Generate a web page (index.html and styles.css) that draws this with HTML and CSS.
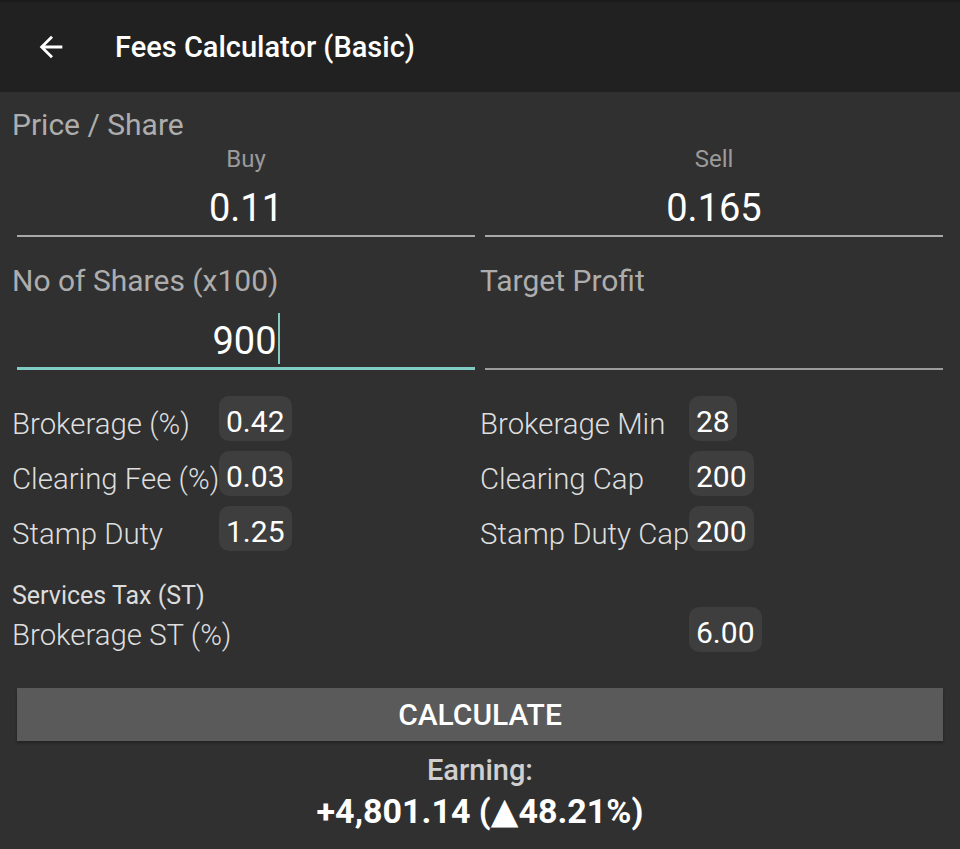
FILE: index.html
```html
<!DOCTYPE html>
<html lang="en">
<head>
    <meta charset="UTF-8">
    <meta name="viewport" content="width=device-width, initial-scale=1.0">
    <title>Fees Calculator (Basic)</title>
    <link rel="stylesheet" href="styles.css">
</head>
<body>
    <header class="app-bar">
        <svg class="back-icon" viewBox="0 0 24 24" width="34" height="34">
            <path d="M20 11H7.83l5.59-5.59L12 4l-8 8 8 8 1.41-1.41L7.83 13H20v-2z" fill="#fff"/>
        </svg>
        <h1 class="app-title">Fees Calculator (Basic)</h1>
    </header>

    <main class="content">
        <div class="section-title">Price / Share</div>
        <div class="pair">
            <div class="field">
                <div class="field-hint">Buy</div>
                <div class="field-input">0.11</div>
            </div>
            <div class="field">
                <div class="field-hint">Sell</div>
                <div class="field-input">0.165</div>
            </div>
        </div>

        <div class="pair shares">
            <div class="field">
                <div class="section-title">No of Shares (x100)</div>
                <div class="field-input focused">900<span class="caret"></span></div>
            </div>
            <div class="field">
                <div class="section-title">Target Profit</div>
                <div class="field-input"></div>
            </div>
        </div>

        <div class="fees">
            <div class="fee"><span class="fee-label">Brokerage (%)</span><span class="chip">0.42</span></div>
            <div class="fee"><span class="fee-label">Brokerage Min</span><span class="chip">28</span></div>
            <div class="fee"><span class="fee-label">Clearing Fee (%)</span><span class="chip">0.03</span></div>
            <div class="fee"><span class="fee-label">Clearing Cap</span><span class="chip">200</span></div>
            <div class="fee"><span class="fee-label">Stamp Duty</span><span class="chip">1.25</span></div>
            <div class="fee"><span class="fee-label">Stamp Duty Cap</span><span class="chip">200</span></div>
        </div>

        <div class="tax-title">Services Tax (ST)</div>
        <div class="fees tax">
            <div class="fee"><span class="fee-label">Brokerage ST (%)</span></div>
            <div class="fee"><span class="fee-label"></span><span class="chip">6.00</span></div>
        </div>

        <button class="calc-button">CALCULATE</button>

        <div class="result">
            <div class="result-label">Earning:</div>
            <div class="result-value">+4,801.14 (<span class="arrow-up">▲</span>48.21%)</div>
        </div>
    </main>
</body>
</html>
```

FILE: styles.css
```css
body {
    margin: 0;
    background: #303030;
    font-family: Roboto, "Noto Sans", sans-serif;
    color: #fff;
}
.app-bar {
    height: 92px;
    background: #212121;
    border-top: 2px solid #1b1b1b;
    display: flex;
    align-items: center;
    padding-left: 34px;
    box-sizing: border-box;
}
.back-icon {
    display: block;
}
.app-title {
    margin: 0 0 0 47px;
    font-size: 29px;
    font-weight: 500;
    color: #fff;
}
.content {
    padding: 16px 12px 0;
}
.section-title {
    font-size: 30px;
    color: #adadad;
    line-height: 34px;
}
.pair {
    display: grid;
    grid-template-columns: 1fr 1fr;
}
.field-hint {
    text-align: center;
    font-size: 24px;
    color: #9a9a9a;
    line-height: 28px;
    margin-top: 3px;
}
.field-input {
    margin: 0 5px;
    height: 62px;
    border-bottom: 2px solid #a8a8a8;
    text-align: center;
    font-size: 38px;
    line-height: 70px;
    color: #fff;
}
.shares {
    margin-top: 27px;
}
.shares .field-input {
    height: 70px;
    line-height: 86px;
    border-bottom: 2px solid #9c9c9c;
}
.shares .field-input.focused {
    height: 69px;
    border-bottom: 3px solid #80cbc4;
}
.caret {
    display: inline-block;
    width: 2px;
    height: 51px;
    background: #80cbc4;
    vertical-align: -10px;
    margin-left: 1px;
}
.fees {
    display: grid;
    grid-template-columns: 1fr 1fr;
    row-gap: 10px;
    margin-top: 26px;
}
.fee {
    display: flex;
    align-items: flex-start;
    height: 45px;
}
.fee-label {
    width: 207px;
    flex-shrink: 0;
    white-space: nowrap;
    padding-top: 8px;
    line-height: 40px;
    font-size: 29.4px;
    font-weight: 300;
    color: #dedede;
}
.fees .fee:nth-child(even) .fee-label {
    width: 209px;
}
.chip {
    background: #3e3e3e;
    border-radius: 10px;
    padding: 7px 7px 0;
    height: 45px;
    box-sizing: border-box;
    line-height: 38px;
    font-size: 30px;
    color: #fff;
}
.tax-title {
    margin-top: 31px;
    font-size: 25px;
    color: #dcdcdc;
    line-height: 28px;
}
.fees.tax {
    margin-top: -3px;
}
.calc-button {
    display: block;
    width: calc(100% - 10px);
    margin: 36px 5px 0;
    height: 53px;
    border: none;
    background: #5a5a5a;
    color: #fff;
    font-family: Roboto, "Noto Sans", sans-serif;
    font-size: 30px;
    font-weight: 500;
    box-shadow: 0 2px 3px rgba(0,0,0,0.3);
}
.result {
    text-align: center;
    margin-top: 11px;
}
.result-label {
    font-size: 29px;
    font-weight: 500;
    color: #cfcfcf;
    line-height: 36px;
}
.result-value {
    font-size: 34px;
    font-weight: 700;
    color: #fff;
    line-height: 46px;
}
.arrow-up {
    font-family: "DejaVu Sans", sans-serif;
    font-size: 36px;
    font-weight: 400;
}
```
